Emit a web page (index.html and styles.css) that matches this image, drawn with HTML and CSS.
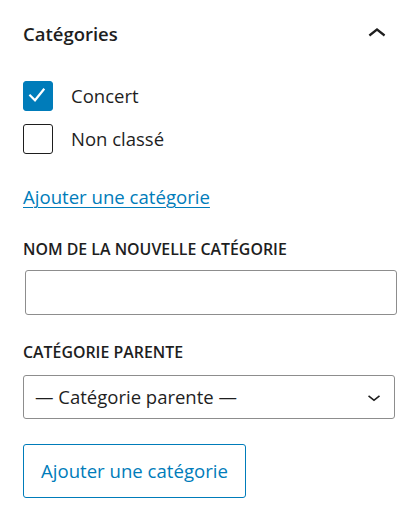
FILE: index.html
```html
<!DOCTYPE html>
<html lang="fr">
<head>
<meta charset="utf-8">
<title>Catégories</title>
<link rel="stylesheet" href="styles.css">
</head>
<body>
<div class="panel">
  <div class="panel-header">
    <h2 class="panel-title">Catégories</h2>
    <svg class="panel-toggle" width="36" height="36" viewBox="0 0 24 24" aria-hidden="true">
      <path d="M6.5 12.4L12 8l5.5 4.4-.9 1.2L12 10l-4.6 3.6-1-1.2z" fill="#1e1e1e"/>
    </svg>
  </div>

  <ul class="cat-list">
    <li class="cat-item">
      <span class="checkbox checked">
        <svg width="30" height="30" viewBox="0 0 30 30" aria-hidden="true">
          <polyline points="7.2,14.6 12,19.3 20.6,8.6" fill="none" stroke="#fff" stroke-width="2.2" stroke-linecap="square"/>
        </svg>
      </span>
      <span class="cat-label">Concert</span>
    </li>
    <li class="cat-item">
      <span class="checkbox"></span>
      <span class="cat-label">Non classé</span>
    </li>
  </ul>

  <a class="add-link" href="#">Ajouter une catégorie</a>

  <label class="field-label label-name">NOM DE LA NOUVELLE CATÉGORIE</label>
  <input class="text-input" type="text">

  <label class="field-label label-parent">CATÉGORIE PARENTE</label>
  <div class="select-wrap">
    <select class="select">
      <option>— Catégorie parente —</option>
    </select>
    <svg class="select-arrow" width="26" height="26" viewBox="0 0 24 24" aria-hidden="true">
      <path d="M17.5 11.6L12 16l-5.5-4.4.9-1.2L12 14l4.6-3.6 1 1.2z" fill="#1e1e1e"/>
    </svg>
  </div>

  <button class="add-button" type="button">Ajouter une catégorie</button>
</div>
</body>
</html>
```

FILE: styles.css
```css
* {
  box-sizing: border-box;
}

body {
  margin: 0;
  background: #ffffff;
  color: #1e1e1e;
  font-family: "Open Sans", "Noto Sans", sans-serif;
}

.panel {
  padding: 0 21px 0 23px;
  display: flex;
  flex-direction: column;
  align-items: flex-start;
}

.panel-header {
  align-self: stretch;
  display: flex;
  justify-content: space-between;
  align-items: flex-start;
  padding-top: 15px;
}

.panel-title {
  margin: 5px 0 0;
  font-size: 18.5px;
  font-weight: 600;
  line-height: 28px;
}

.panel-toggle {
  display: block;
  margin-top: 1px;
}

.cat-list {
  list-style: none;
  margin: 29px 0 0;
  padding: 0;
  display: flex;
  flex-direction: column;
  gap: 13px;
}

.cat-item {
  display: flex;
  align-items: center;
  gap: 18px;
  height: 30px;
}

.checkbox {
  width: 30px;
  height: 30px;
  border: 1.5px solid #1e1e1e;
  border-radius: 3px;
  display: block;
  background: #fff;
}

.checkbox svg {
  display: block;
  margin: -1.5px;
}

.checkbox.checked {
  background: #007cba;
  border-color: #007cba;
}

.cat-label {
  font-size: 18.5px;
  line-height: 30px;
}

.add-link {
  margin-top: 31px;
  font-size: 18.6px;
  line-height: 24px;
  color: #007cba;
  text-decoration: underline;
  text-underline-offset: 3px;
  text-decoration-thickness: 1px;
}

.field-label {
  display: block;
  font-size: 15.9px;
  font-weight: 600;
  line-height: 20px;
}

.label-name {
  margin-top: 30px;
}

.text-input {
  margin: 11px 0 0 2px;
  width: 372px;
  height: 45px;
  border: 1px solid #8d8d8d;
  border-radius: 3px;
  background: #fff;
  font-family: inherit;
  font-size: 18px;
}

.label-parent {
  margin-top: 27px;
}

.select-wrap {
  position: relative;
  margin-top: 13px;
  width: 372px;
}

.select {
  display: block;
  width: 372px;
  height: 44px;
  -webkit-appearance: none;
  appearance: none;
  border: 1px solid #8d8d8d;
  border-radius: 3px;
  background: #fff;
  color: #1e1e1e;
  font-family: inherit;
  font-size: 18.5px;
  padding: 0 40px 0 11px;
  line-height: 42px;
}

.select-arrow {
  position: absolute;
  right: 8px;
  top: 9px;
  pointer-events: none;
}

.add-button {
  margin-top: 25px;
  height: 54px;
  padding: 0 17px;
  border: 1px solid #007cba;
  border-radius: 3px;
  background: #fff;
  color: #007cba;
  font-family: inherit;
  font-size: 18.6px;
  line-height: 52px;
  cursor: pointer;
}
```
